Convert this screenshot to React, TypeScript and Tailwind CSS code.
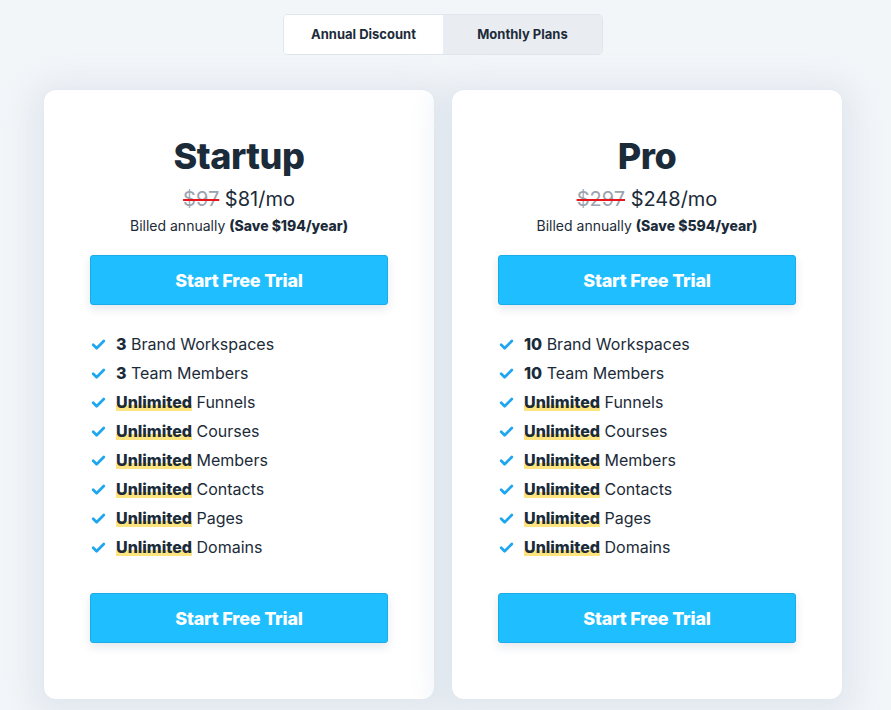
const plans = [
  { name: "Startup", old: "$97", price: "$81/mo", save: "$194", brands: "3", team: "3" },
  { name: "Pro", old: "$297", price: "$248/mo", save: "$594", brands: "10", team: "10" },
]

const unlimited = ["Funnels", "Courses", "Members", "Contacts", "Pages", "Domains"]

function Check() {
  return (
    <svg width="15" height="15" viewBox="0 0 24 24" fill="none" className="shrink-0">
      <path d="M3.5 12.5l5.5 5.5L20.5 6.5" stroke="#1ea7f0" strokeWidth="4.4" strokeLinecap="round" strokeLinejoin="round" />
    </svg>
  )
}

function TrialButton() {
  return (
    <button className="w-full h-[50px] rounded-[3px] bg-[#1ebeff] border border-[#19ace9] text-white text-[18px] font-extrabold tracking-[-0.2px] shadow-[0_4px_10px_rgba(30,60,100,0.12)]">
      Start Free Trial
    </button>
  )
}

function Card({ plan }: { plan: (typeof plans)[number] }) {
  return (
    <div className="w-[390px] bg-white rounded-[12px] px-[46px] pt-[45px] pb-[56px] shadow-[0_0_0_1px_rgba(226,232,240,0.35),0_6px_30px_14px_rgba(215,224,234,0.6)] flex flex-col items-center">
      <h2 className="text-[36px] leading-[43px] font-extrabold tracking-[-0.5px] text-[#1c2b39]">{plan.name}</h2>
      <div className="mt-[7px] text-[20px] leading-[28px] text-[#1c2b39]">
        <span className="text-[#9aa4ae] line-through decoration-[#e8141b] decoration-2">{plan.old}</span>{" "}
        {plan.price}
      </div>
      <div className="mt-[3px] text-[14px] leading-[20px] text-[#1c2b39]">
        Billed annually <span className="font-extrabold">(Save {plan.save}/year)</span>
      </div>
      <div className="mt-[19px] w-full">
        <TrialButton />
      </div>
      <ul className="mt-[25px] w-full flex flex-col text-[16px] leading-[29px] text-[#1c2b39]">
        <li className="flex items-center gap-[10px] pl-[1px]">
          <Check />
          <span><b className="font-extrabold">{plan.brands}</b> Brand Workspaces</span>
        </li>
        <li className="flex items-center gap-[10px] pl-[1px]">
          <Check />
          <span><b className="font-extrabold">{plan.team}</b> Team Members</span>
        </li>
        {unlimited.map((u) => (
          <li key={u} className="flex items-center gap-[10px] pl-[1px]">
            <Check />
            <span>
              <b className="font-extrabold bg-[linear-gradient(transparent_66%,#fde47f_66%,#fde47f_94%,transparent_94%)]">Unlimited</b> {u}
            </span>
          </li>
        ))}
      </ul>
      <div className="mt-[31px] w-full">
        <TrialButton />
      </div>
    </div>
  )
}

export default function App() {
  return (
    <div className="min-h-[710px] w-full bg-[#f3f6f9] font-['Inter',sans-serif]">
      <div className="w-[886px] flex flex-col items-center pt-[14px]">
        <div className="flex w-[320px] h-[41px] rounded-[5px] border border-[#e0e6ed] overflow-hidden text-[13px] font-bold text-[#1c2b39]">
          <div className="flex-1 bg-white flex items-center justify-center">Annual Discount</div>
          <div className="flex-1 bg-[#e9edf2] flex items-center justify-center">Monthly Plans</div>
        </div>
        <div className="mt-[35px] flex gap-[18px]">
          {plans.map((p) => (
            <Card key={p.name} plan={p} />
          ))}
        </div>
      </div>
    </div>
  )
}
